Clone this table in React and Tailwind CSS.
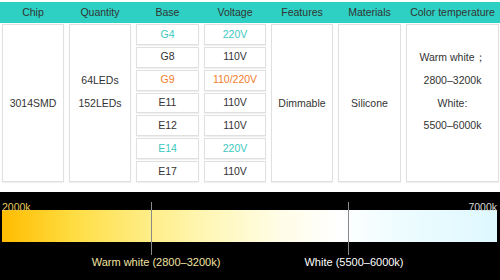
const headers = [
  "Chip",
  "Quantity",
  "Base",
  "Voltage",
  "Features",
  "Materials",
  "Color temperature",
];

const bases = [
  { base: "G4", volt: "220V", tone: "text-[#3cc9c0]" },
  { base: "G8", volt: "110V", tone: "text-[#333]" },
  { base: "G9", volt: "110/220V", tone: "text-[#f07d2c]" },
  { base: "E11", volt: "110V", tone: "text-[#333]" },
  { base: "E12", volt: "110V", tone: "text-[#333]" },
  { base: "E14", volt: "220V", tone: "text-[#3cc9c0]" },
  { base: "E17", volt: "110V", tone: "text-[#333]" },
];

const cell =
  "border border-[#e0e0e0] bg-white shadow-[0_1px_1px_rgba(0,0,0,0.06)]";

function Stack({ lines }) {
  return (
    <div
      className={`${cell} row-span-7 flex flex-col items-center justify-center leading-[22.7px]`}
    >
      {lines.map((line, i) => (
        <div key={i}>{line || "\u00a0"}</div>
      ))}
    </div>
  );
}

export default function App() {
  return (
    <div className="h-[280px] w-[500px] overflow-hidden bg-white font-['Liberation_Sans',Arial,sans-serif] text-[10.5px] text-[#333]">
      <div className="mt-[2px] grid h-[21px] grid-cols-[62px_62px_63px_62px_62px_63px_1fr] items-center gap-x-[5px] bg-[#2dd0c2] pl-[2px] pr-px">
        {headers.map((h) => (
          <div key={h} className="text-center">
            {h}
          </div>
        ))}
      </div>

      <div className="mt-px grid h-[158px] grid-cols-[62px_62px_63px_62px_62px_63px_1fr] grid-rows-7 gap-x-[5px] gap-y-[2px] pl-[2px] pr-px">
        <Stack lines={["", "3014SMD", ""]} />
        <Stack lines={["64LEDs", "152LEDs", ""]} />
        <div className="col-start-3 row-span-7 row-start-1 grid grid-rows-7 gap-y-[2px]">
          {bases.map((b) => (
            <div
              key={b.base}
              className={`${cell} flex items-center justify-center ${b.tone}`}
            >
              {b.base}
            </div>
          ))}
        </div>
        <div className="col-start-4 row-span-7 row-start-1 grid grid-rows-7 gap-y-[2px]">
          {bases.map((b) => (
            <div
              key={b.base}
              className={`${cell} flex items-center justify-center ${b.tone}`}
            >
              {b.volt}
            </div>
          ))}
        </div>
        <Stack lines={["", "Dimmable", ""]} />
        <Stack lines={["", "Silicone", ""]} />
        <Stack
          lines={["Warm white；", "2800–3200k", "White:", "5500–6000k", ""]}
        />
      </div>

      <div className="relative mt-[10px] h-[88px] bg-black">
        <div className="absolute left-[2px] top-[18px] h-[32px] w-[495px] bg-[linear-gradient(to_right,#ffbc00_0%,#ffdc40_14%,#ffec80_28%,#fff7b8_42%,#fffde6_56%,#ffffff_68%,#eefcff_80%,#def8ff_100%)]" />
        <div className="absolute left-[2px] top-[10px] text-[10.5px] leading-none text-[#e6c85a]">
          2000k
        </div>
        <div className="absolute right-[3px] top-[10px] text-[10.5px] leading-none text-[#d8d8d8]">
          7000k
        </div>
        <div className="absolute left-[151px] top-[10px] h-[53px] w-px bg-[#8a8a8a]" />
        <div className="absolute left-[348px] top-[10px] h-[53px] w-px bg-[#8a8a8a]" />
        <div className="absolute left-[156px] top-[65px] -translate-x-1/2 whitespace-nowrap text-[11px] leading-none text-[#f2e3a0]">
          Warm white (2800–3200k)
        </div>
        <div className="absolute left-[354px] top-[65px] -translate-x-1/2 whitespace-nowrap text-[11px] leading-none text-white">
          White (5500–6000k)
        </div>
      </div>
    </div>
  );
}
